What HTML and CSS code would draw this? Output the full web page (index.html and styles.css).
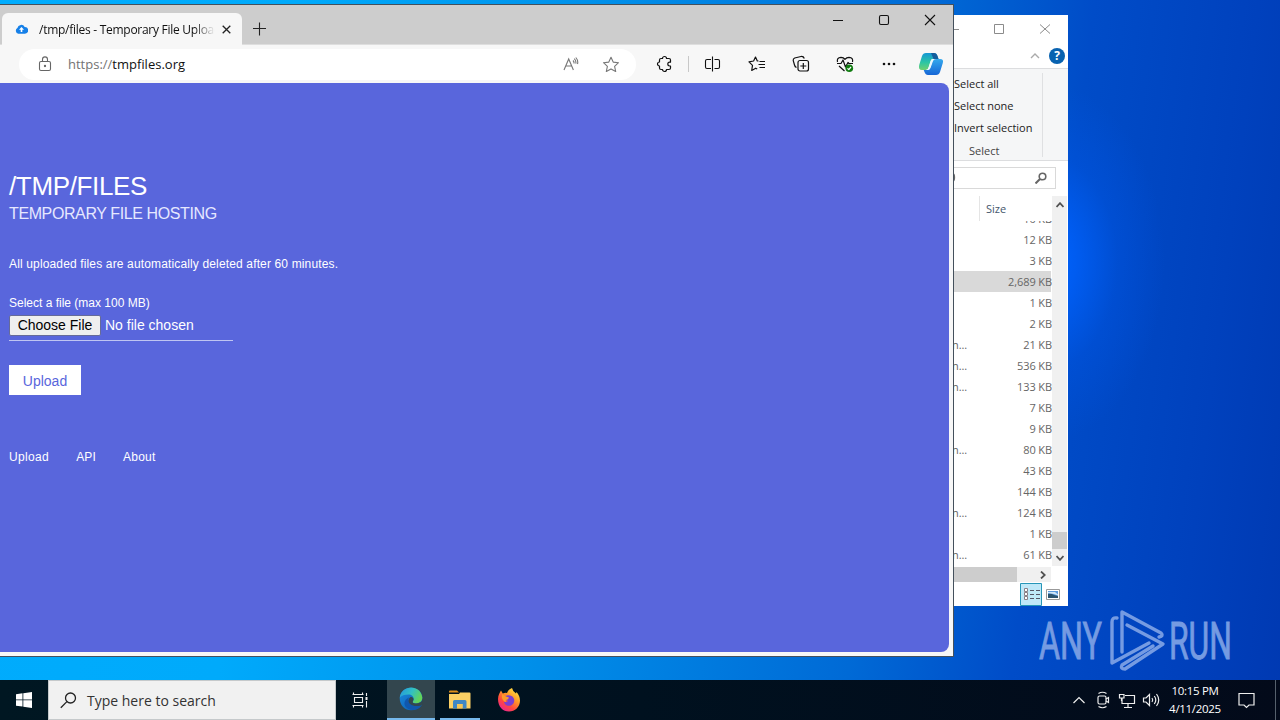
FILE: index.html
```html
<!DOCTYPE html>
<html lang="en">
<head>
<meta charset="utf-8">
<title>Desktop</title>
<link rel="stylesheet" href="styles.css">
</head>
<body>
<div class="desktop">
  <svg class="watermark" width="200" height="68" viewBox="1035 606 200 68">
    <g fill="#759be2" stroke="#759be2" stroke-width=".9" font-family="Roboto, sans-serif" font-size="51">
      <text x="1039" y="659" textLength="63" lengthAdjust="spacingAndGlyphs">ANY</text>
      <text x="1169" y="659" textLength="63" lengthAdjust="spacingAndGlyphs">RUN</text>
    </g>
    <g fill="none" stroke="#759be2" stroke-width="3.4" stroke-linejoin="round" stroke-linecap="round">
      <path d="M1117 618q-5-1-5 4v41l37-20"/>
      <path d="M1122 652v-40l39 21q3 3-2 4"/>
      <path d="M1127 625l36 19-38 25q-5 0-3-4l31-19"/>
    </g>
  </svg>

  <section class="explorer">
    <div class="ex-title">
      <svg width="128" height="28" viewBox="940 15 128 28" fill="none" stroke="#8b8b8b"><path d="M948 29.5h11M994.5 24.500h9v9h-9zM1040 24.500l10 9M1040 33.500l10-9"/></svg>
    </div>
    <div class="ex-help">
      <svg width="10" height="6" viewBox="0 0 10 6" fill="none" stroke="#aaa" stroke-width="1.400"><path d="M1 5l4-4 4 4"/></svg>
      <span class="help">?</span>
    </div>
    <div class="ribbon">
      <div class="ribbon-group">
        <div class="cmd c1">Select all</div>
        <div class="cmd c2">Select none</div>
        <div class="cmd c3">Invert selection</div>
        <div class="cmd label">Select</div>
      </div>
    </div>
    <div class="ex-search"><div class="ex-box"><svg class="glyph-p" width="6" height="12" viewBox="0 0 6 12" fill="none" stroke="#666" stroke-width="1.300"><path d="M0 2h1q1.500 0 1.500 3.500T1 9H0"/></svg><svg width="12" height="12" viewBox="0 0 12 12" fill="none" stroke="#666" stroke-width="1.600"><circle cx="7.500" cy="4.500" r="3.300"/><path d="M5 7l-4.500 4.500" stroke-width="2"/></svg></div></div>
    <div class="ex-main">
      <div class="ex-left">
        <div class="col-head"><span>Size</span></div>
        <div class="rows">
          <div class="row"><i></i><b>10 KB</b></div>
          <div class="row"><i></i><b>12 KB</b></div>
          <div class="row"><i></i><b>3 KB</b></div>
          <div class="row selected"><i></i><b>2,689 KB</b></div>
          <div class="row"><i></i><b>1 KB</b></div>
          <div class="row"><i></i><b>2 KB</b></div>
          <div class="row"><i>n...</i><b>21 KB</b></div>
          <div class="row"><i>n...</i><b>536 KB</b></div>
          <div class="row"><i>n...</i><b>133 KB</b></div>
          <div class="row"><i></i><b>7 KB</b></div>
          <div class="row"><i></i><b>9 KB</b></div>
          <div class="row"><i>n...</i><b>80 KB</b></div>
          <div class="row"><i></i><b>43 KB</b></div>
          <div class="row"><i></i><b>144 KB</b></div>
          <div class="row"><i>n...</i><b>124 KB</b></div>
          <div class="row"><i></i><b>1 KB</b></div>
          <div class="row"><i>n...</i><b>61 KB</b></div>
        </div>
        <div class="hscroll"><div class="hthumb"></div><svg width="6" height="8" viewBox="0 0 6 8" fill="none" stroke="#505050" stroke-width="1.800"><path d="M1 .5L4.800 4 1 7.500"/></svg></div>
      </div>
      <div class="vscroll">
        <svg width="8" height="6" viewBox="0 0 8 6" fill="none" stroke="#505050" stroke-width="1.800"><path d="M.5 5L4 1.200 7.500 5"/></svg>
        <div class="vthumb"></div>
        <svg width="8" height="6" viewBox="0 0 8 6" fill="none" stroke="#505050" stroke-width="1.800"><path d="M.5 1L4 4.800 7.500 1"/></svg>
      </div>
    </div>
    <div class="ex-status">
      <svg width="22" height="23" viewBox="0 0 22 23" fill="none"><path d="M.5.500h21v22H.5z" fill="#bfe8f8" stroke="#2696b8"/><path d="M4.500 5.500h3v3h-3zM4.500 9.500h3v3h-3zM4.500 13.500h3v3h-3z" fill="#fff" stroke="#8a8088"/><path d="M10 7.500h4M16 7.500h4M10 11.500h4M16 11.500h4M10 15.500h4M16 15.500h4" stroke="#556"/></svg>
      <svg width="14" height="11" viewBox="0 0 14 11"><path d="M.5.500h13v10H.5z" fill="#fff" stroke="#999"/><path d="M2 2h10v7H2z" fill="#5b9be0"/><path d="M2 5q3-1 6 1l4 1v2H2z" fill="#2b5470"/><path d="M2 3h7l3 2.500v1L8 5 2 4z" fill="#cfe6f8"/></svg>
    </div>
  </section>

  <section class="browser">
    <div class="tabstrip">
      <div class="tab">
        <svg class="cloud" width="13" height="10" viewBox="0 0 13 10"><path d="M3.300 9.700A3.100 3.100 0 0 1 2.400 4 3.900 3.900 0 0 1 9.700 3 3.300 3.300 0 0 1 10 9.700z" fill="#1680e8"/><path d="M6.500 3L4 5.700h1.700V8h1.600V5.700H9z" fill="#fff"/></svg>
        <span class="tab-title">/tmp/files - Temporary File Upload</span>
        <svg class="tab-close" width="9" height="9" viewBox="0 0 9 9" stroke="#222" stroke-width="1.300"><path d="M.7.700l7.600 7.600M8.300.700L.7 8.300"/></svg>
      </div>
      <svg class="plus" width="14" height="14" viewBox="0 0 14 14" stroke="#222" stroke-width="1.100"><path d="M7.500 .5v13M1 6.500h13"/></svg>
      <svg class="winbtns" width="104" height="12" viewBox="832 14 104 12" fill="none" stroke="#111" stroke-width="1.100"><path d="M833 20.500h10M925 15l10 10M935 15l-10 10"/><rect x="879.500" y="15.500" width="9" height="9" rx="1.500"/></svg>
    </div>
    <div class="toolbar">
      <div class="omnibox">
        <svg class="lock" width="14" height="16" viewBox="0 0 14 16" fill="none" stroke="#666" stroke-width="1.100"><rect x="1.500" y="5.500" width="11" height="9" rx="1.500"/><path d="M4.500 5.500V3.400a2.500 2.500 0 0 1 5 0v2.100"/><circle cx="7" cy="10" r=".6" fill="#666"/></svg>
        <span class="url"><span class="scheme">https://</span><span class="host">tmpfiles.org</span></span>
        <svg class="read" width="16" height="14" viewBox="0 0 16 14" fill="none" stroke="#777" stroke-width="1.100"><path d="M1 13L5.700 2 10.400 13M2.700 9h6M10 3.500q1.300 1.300 1 3M11.200 1.700q2.200 2 1.600 5M12.800.500q2.700 3 1.700 6.500"/></svg>
        <svg class="star" width="18" height="17" viewBox="0 0 18 17" fill="none" stroke="#777" stroke-width="1.100" stroke-linejoin="round"><path d="M9 1.200l2.200 4.900 5.300.600-3.900 3.600 1.100 5.200L9 12.900l-4.700 2.600 1.100-5.200L1.500 6.700l5.300-.600z"/></svg>
      </div>
      <div class="slot first"><svg width="18" height="18" viewBox="0 0 18 18" fill="none" stroke="#111" stroke-width="1.200" stroke-linejoin="round"><path d="M5 3.500h1.500a2 2 0 0 1 4 0H13q1.500 0 1.500 1.500v2.200h-.8a1.900 1.900 0 0 0 0 3.800h.8v2q0 1.500-1.500 1.500h-2.500a2 2 0 0 1-4 0H5q-1.500 0-1.500-1.500V11a2 2 0 0 1 0-4V5q0-1.500 1.500-1.500z"/></svg></div>
      <div class="divider"></div>
      <div class="slot"><svg width="18" height="18" viewBox="0 0 18 18" fill="none" stroke="#111" stroke-width="1.100"><path d="M7 4.500H3q-1.500 0-1.500 1.500v6q0 1.500 1.500 1.500h4M10.500 4.500H14q1.500 0 1.500 1.500v6q0 1.500-1.500 1.500h-3.500M8.500 1.500v15"/></svg></div>
      <div class="slot"><svg width="18" height="18" viewBox="0 0 18 18" fill="none" stroke="#111" stroke-width="1.200" stroke-linejoin="round"><path d="M10.500 6H9.300L7.500 2 5.600 6 1 6.800l3.500 3.500-.8 5.200 4-2.300 1.500.8M11.500 6.500h5.500M10.500 9.500H17M11.500 12.500h5.500"/></svg></div>
      <div class="slot"><svg width="18" height="18" viewBox="0 0 18 18" fill="none" stroke="#111" stroke-width="1.200"><rect x="6" y="5.500" width="10.500" height="10.500" rx="2"/><path d="M11.300 8v6M8.300 11h6M4.500 12.500Q3 12 2.500 10L1.200 5.500Q1 3.700 2.700 3L9 1.500q2.500-.300 3.300 2"/></svg></div>
      <div class="slot"><svg width="18" height="18" viewBox="0 0 18 18" fill="none" stroke="#111" stroke-width="1.200" stroke-linejoin="round"><path d="M1.500 7Q.500 2.500 5 2.300 7.500 2.300 9 4.300 10.500 2.300 13 2.300 17.500 2.500 16.500 7M3 11l5.500 5M1 8.500h4L7 5l2.500 7L12 7.500l1 1h4"/><circle cx="13.300" cy="13.300" r="3.800" fill="#107c10" stroke="none"/><path d="M11.500 13.300l1.300 1.300L15 12" stroke="#fff"/></svg></div>
      <div class="slot"><svg width="16" height="4" viewBox="0 0 16 4" fill="#111"><circle cx="3" cy="2" r="1.300"/><circle cx="8" cy="2" r="1.300"/><circle cx="13" cy="2" r="1.300"/></svg></div>
      <div class="slot copilot"><svg width="26" height="24" viewBox="0 0 26 24"><defs><linearGradient id="ca" x2="0" y2="1"><stop stop-color="#1597d5"/><stop offset=".55" stop-color="#2bc5a5"/><stop offset="1" stop-color="#70d070"/></linearGradient><linearGradient id="cb" x2="0" y2="1"><stop stop-color="#35a9ed"/><stop offset="1" stop-color="#1666d6"/></linearGradient></defs><path d="M8 1h8q2.500 0 3.500 3l1 3h-5q-2 0-2.700 2l-2 6q-.800 3-3 3H4Q0 18 1.200 13L4 4Q5 1 8 1z" fill="url(#ca)"/><path d="M18 23h-8q-2.500 0-3.500-3l-.8-2h4q2 0 2.800-2l2.500-7q.800-2 3-2h4Q26 7 24.800 11L22 20q-1 3-4 3z" fill="url(#cb)"/><path d="M13 1h3q2.500 0 3.500 3l1 3h-5z" fill="#155d9d"/><path d="M14 7h2.300q-1.300.300-1.800 1.800l-2.500 7.200q-.600 1.800-2 2H8.500q1.500-.500 2-2.500l2-6.500q.500-1.700 1.500-2z" fill="#e9f8ff"/></svg></div>
    </div>
    <main class="page">
      <h1>/TMP/FILES</h1>
      <h2>TEMPORARY FILE HOSTING</h2>
      <p class="note">All uploaded files are automatically deleted after 60 minutes.</p>
      <p class="field-label">Select a file (max 100 MB)</p>
      <div class="file"><span class="choose"><span>Choose File</span></span><span class="none">No file chosen</span></div>
      <div class="upload"><span>Upload</span></div>
      <nav><a class="n1">Upload</a><a class="n2">API</a><a class="n3">About</a></nav>
    </main>
  </section>

  <footer class="taskbar">
    <div class="start"><svg width="16" height="16" viewBox="0 0 16 16" fill="#fff"><path d="M0 2.200l6.500-.9v6.200H0zM7.300 1.200L16 0v7.500H7.300zM0 8.300h6.500v6.300L0 13.700zM7.300 8.300H16V16l-8.700-1.200z"/></svg></div>
    <div class="search"><svg width="17" height="17" viewBox="0 0 17 17" fill="none" stroke="#222" stroke-width="1.300"><circle cx="10.500" cy="6" r="5"/><path d="M6.900 9.600L.8 15.700"/></svg><span>Type here to search</span></div>
    <div class="task view"><svg width="18" height="18" viewBox="0 0 18 18" fill="none" stroke="#eee" stroke-width="1.100"><path d="M2.500 1.500v2h9v-2M2.500 16.500v-2h9v2M1.500 3.500h11M1.500 14.500h11M3.500 6.500h8v5h-8zM15.500 2v3M15.500 10v6.500"/><path d="M14.500 6h2v3h-2z" fill="#eee" stroke="none"/></svg></div>
    <div class="task active"><svg width="24" height="24" viewBox="0 0 24 24"><defs><linearGradient id="e1" x2="1" y2=".4"><stop stop-color="#2495df"/><stop offset=".55" stop-color="#31bfc4"/><stop offset="1" stop-color="#62d45a"/></linearGradient><linearGradient id="e2" x2="1" y2="1"><stop stop-color="#1b8ce0"/><stop offset="1" stop-color="#0a57aa"/></linearGradient></defs><path d="M.7 11C1 5 6 .7 12 .7S23.300 5 23.300 10.500L22.500 18.500Q19 23.300 12 23.300C6 23.300.7 18.500.7 11z" fill="url(#e2)"/><path d="M.8 10.500C2.300-3 22-3 23.300 10.500c.200 4-3 6-6.300 6-3 0-4-1-3-2.500 2-3-.5-6.500-4.500-6.500-4 0-7.200 1-8.700 3z" fill="url(#e1)"/><path d="M14 14c-1 1.500 0 2.500 3 2.500 2.500 0 4.800-1 6.100-2.800V17q-.5 1-1 1.500-4 2-7.500 1.500c-4-.5-6-4-5.300-6.500q.5-2.300 2.200-3.600c2.500 0 4 2.100 2.500 4.100z" fill="#33464e"/><path d="M9.300 13c.2 4 4.200 7 11.500 5.800q.9-.1 1 .5c-3 3.700-8 4.600-12.300 2.700C4 19.500 4 13 10.300 10.300q-1 1-1 2.700z" fill="#1057ad"/></svg></div>
    <div class="task running"><svg width="22" height="19" viewBox="0 0 22 19"><path d="M0 1.500Q0 .5 1 .5h7l2 2H0z" fill="#df8f1a"/><path d="M0 4h10l1-1.500h9.500q1 0 1 1v15H0z" fill="#fcd064"/><path d="M4 18.500v-7q0-1.500 1.500-1.500h10.500q1.500 0 1.500 1.500v7h-4V14H8v4.500z" fill="#3f87c5"/><path d="M8 14h5.500v4.500H8z" fill="#f6c556"/></svg></div>
    <div class="task fox"><svg width="24" height="24" viewBox="0 0 24 24"><defs><linearGradient id="f1" x1=".9" y1="0" x2=".2" y2="1"><stop stop-color="#fff04a"/><stop offset=".4" stop-color="#ff9a27"/><stop offset=".7" stop-color="#ff473f"/><stop offset="1" stop-color="#e8219a"/></linearGradient></defs><path d="M1 11C1 7 3 4.500 4 2.500l1.800 3Q8 4.500 10 5q1-3.500 5-5 .5 3 4 5.500l.5-1.500Q23 8 23 12.500C23 19 18 23.500 12 23.500S1 19 1 11z" fill="url(#f1)"/><path d="M8 8.500q3-2 6.500-.5c4 2 3.500 8-.5 9.500-4 1.300-7-1.500-7-4 1.500 1 3 .6 4-.6-1-1-3.500-.3-3-4.400z" fill="#7a3fd0"/><path d="M5 6l4 2.500 3 1Q11.500 11.500 9 12q-1 .8.3 2.300Q6 13.500 5 10z" fill="#ff9c2a"/></svg></div>
    <div class="tray">
      <svg width="92" height="20" viewBox="1072 690 92 20" fill="none" stroke="#eee" stroke-width="1.200"><path d="M1073.500 703l5.500-5.500 5.500 5.500"/><rect x="1098" y="696" width="8" height="8" rx="1.500"/><path d="M1106 699l2.500-1.500v5L1106 701M1098.500 693.500q4-2.500 8 0M1098.500 706.500q4 2.500 8 0"/><path d="M1125 695.500h9.500v8H1122V698M1128 704v3M1124 707.500h8"/><path d="M1119.500 694.500h4.500v3.500h-4.500zM1121.500 698v3"/><path d="M1143.500 698h2.500l3.500-3.500v11L1146 702h-2.500zM1152 698q1.500 2 0 4M1154.300 696q3 4 0 8M1156.500 694q4.500 6 0 12"/></svg>
      <div class="clock"><span class="time">10:15 PM</span><span class="date">4/11/2025</span></div>
      <svg class="note-icon" width="17" height="17" viewBox="0 0 17 17" fill="none" stroke="#eee" stroke-width="1.200"><path d="M1 1.500h15v11.500h-5L8.500 15.500 6 13H1z"/></svg>
      <div class="peek"></div>
    </div>
  </footer>
</div>
</body>
</html>
```

FILE: styles.css
```css
* { box-sizing: border-box; }
body { margin: 0; overflow: hidden; font-family: "Open Sans", "Noto Sans", sans-serif; }
svg { display: block; flex: none; }
.desktop {
  position: relative; width: 1280px; height: 720px; overflow: hidden; white-space: nowrap;
  display: flex; flex-direction: column; justify-content: flex-end;
  background:
    radial-gradient(ellipse 120px 180px at 1045px 262px, rgba(0, 100, 255, 1) 0, rgba(0, 98, 255, .75) 25%, rgba(0, 92, 245, .28) 60%, rgba(0, 90, 240, 0) 100%),
    linear-gradient(97deg, #00acfd 0, #00aafb 22%, #0090ea 44%, #006ad6 68%, #004cc8 80%, #0041bd 92%, #0039b2 100%);
}
.watermark { position: absolute; left: 1035px; top: 606px; }

.explorer {
  position: absolute; left: 940px; top: 15px; width: 128px; height: 591px;
  background: #fff; color: #222; font-size: 11px; display: flex; flex-direction: column;
}
.ex-title { height: 28px; }
.ex-help { height: 25px; display: flex; align-items: center; justify-content: flex-end; gap: 9px; padding: 0 3px 0 0; }
.help { width: 16px; height: 16px; border-radius: 50%; background: #0862b0; color: #fff; font-size: 12px; line-height: 16px; font-weight: 700; text-align: center; }
.ribbon { height: 93px; background: #f5f6f7; border-top: 1px solid #dcdddf; border-bottom: 1px solid #dcdddf; padding-top: 4px; }
.ribbon-group { width: 103px; height: 84px; padding-left: 14px; border-right: 1px solid #dfe0e2; }
.cmd { height: 22px; line-height: 22px; }
.cmd.label { padding-left: 15px; line-height: 24px; color: #444; }
.ex-search { height: 35px; padding: 6px 12px 0 0; }
.ex-box { height: 22px; border: 1px solid #d9d9d9; display: flex; justify-content: space-between; align-items: center; padding: 0 8px 0 11px; }
.ex-main { display: flex; height: 387px; }
.ex-left { width: 112px; display: flex; flex-direction: column; }
.col-head { height: 25px; flex: none; display: flex; margin-left: 39px; padding-left: 6px; border-left: 1px solid #e5e5e5; line-height: 25px; color: #44566c; }
.rows { height: 346px; flex: none; overflow: hidden; }
.row { height: 21px; line-height: 21px; display: flex; justify-content: space-between; padding-left: 12px; color: #666; letter-spacing: -.1px; }
.row:first-child { margin-top: -13px; }
.row i, .row b { font-style: normal; font-weight: 400; }
.row.selected { background: linear-gradient(#d9d9d9, #d9d9d9) 0 0 / 111px 100% no-repeat; }
.hscroll { height: 15px; flex: none; width: 111px; background: #f0f0f0; display: flex; justify-content: space-between; align-items: center; padding-right: 5px; }
.hthumb { width: 77px; height: 15px; background: #cdcdcd; }
.vscroll { width: 15px; height: 370px; background: #f0f0f0; display: flex; flex-direction: column; align-items: center; padding: 6px 0 5px; }
.vthumb { width: 15px; height: 17px; background: #cdcdcd; margin: auto 0 6px; }
.ex-status { height: 23px; display: flex; align-items: center; gap: 4px; padding-left: 80px; }

.browser {
  position: absolute; left: 0; top: 4px; width: 954px; height: 653px; background: #f7f7f7;
  border: 1px solid #44505c; border-left: 0; display: flex; flex-direction: column;
}
.tabstrip { height: 40px; background: #cdcdcd; display: flex; padding-left: 2px; border-bottom: 1px solid #dedede; }
.tab { width: 240px; height: 32px; margin-top: 8px; background: #f7f7f7; border-radius: 6px 6px 0 0; display: flex; align-items: center; padding-left: 13px; color: #111; }
.tab-title {
  width: 176px; margin-left: 11px; font-size: 12px; letter-spacing: -.27px; overflow: hidden;
  -webkit-mask-image: linear-gradient(90deg, #000 155px, transparent 176px);
  mask-image: linear-gradient(90deg, #000 155px, transparent 176px);
}
.tab-close { margin-left: 7px; }
.plus { margin: 17px 0 0 10px; }
.winbtns { margin: 9px 17px 0 auto; }
.toolbar { height: 38px; display: flex; align-items: center; padding-left: 19px; }
.omnibox { width: 617px; height: 31px; border-radius: 16px; background: #fff; display: flex; align-items: center; padding-left: 19px; }
.url { margin-left: 16px; font-size: 13px; }
.scheme { color: #737373; }
.host { color: #111; }
.read { margin-left: auto; }
.star { margin: 0 16px 0 23px; }
.slot { width: 44px; display: flex; justify-content: center; }
.slot.first { margin-left: 7px; }
.slot.copilot { width: 39px; }
.divider { width: 1px; height: 16px; background: #c8c8c8; margin: 0 2px 0 1px; }
.page {
  width: 949px; height: 569px; background: #5966dc; border-radius: 0 8px 8px 0; color: #fff;
  font-family: "Liberation Sans", Arial, sans-serif; padding: 88px 0 0 9px;
}
h1 { margin: 0; font-size: 26px; line-height: 30px; font-weight: 400; letter-spacing: -.35px; }
h2 { margin: 0; font-size: 16px; line-height: 26px; height: 24px; font-weight: 400; letter-spacing: -.39px; color: #e6e8ff; }
.note { margin: 30px 0 0; font-size: 12px; line-height: 18px; letter-spacing: .145px; }
.field-label { margin: 21px 0 0; font-size: 12px; line-height: 18px; letter-spacing: 0; }
.file { width: 224px; height: 30px; margin-top: -1px; border-bottom: 1px solid #bfc5f2; display: flex; align-items: center; gap: 4px; font-size: 14px; }
.choose { width: 92px; height: 21px; background: #efefef; border: 1px solid #666b99; border-radius: 2px; color: #000; line-height: 19px; text-align: center; }
.none { line-height: 16px; padding-bottom: 2px; }
.upload { width: 72px; height: 30px; margin-top: 24px; background: #fff; color: #5966dc; font-size: 14px; line-height: 32px; text-align: center; }
nav { display: flex; gap: 27px; margin-top: 52px; font-size: 12px; line-height: 20px; letter-spacing: .2px; }
.n1 { letter-spacing: .35px; }

.taskbar { position: relative; height: 40px; background: linear-gradient(90deg, #001722, #00111f 50%, #030a1a); display: flex; color: #fff; }
.start { width: 48px; padding: 12px 0 0 16px; }
.search { width: 288px; background: #f1f1f1; border: 1px solid #c5c9cb; display: flex; align-items: center; gap: 10px; padding-left: 11px; color: #333; font-size: 14px; }
.task { width: 48px; height: 40px; display: flex; align-items: center; justify-content: center; }
.task.view { margin-right: 3px; }
.active { background: #33464e; border-bottom: 2px solid #76b9ed; }
.running { width: 40px; margin: 0 5px; border-bottom: 2px solid #76b9ed; }
.tray { margin-left: auto; display: flex; align-items: center; }
.clock { width: 52px; margin-left: 5px; display: flex; flex-direction: column; align-items: center; font-size: 11.5px; line-height: 18px; letter-spacing: -.3px; }
.note-icon { margin: 0 20px 0 17px; }
.peek { width: 5px; height: 40px; border-left: 1px solid #56606c; }
```
